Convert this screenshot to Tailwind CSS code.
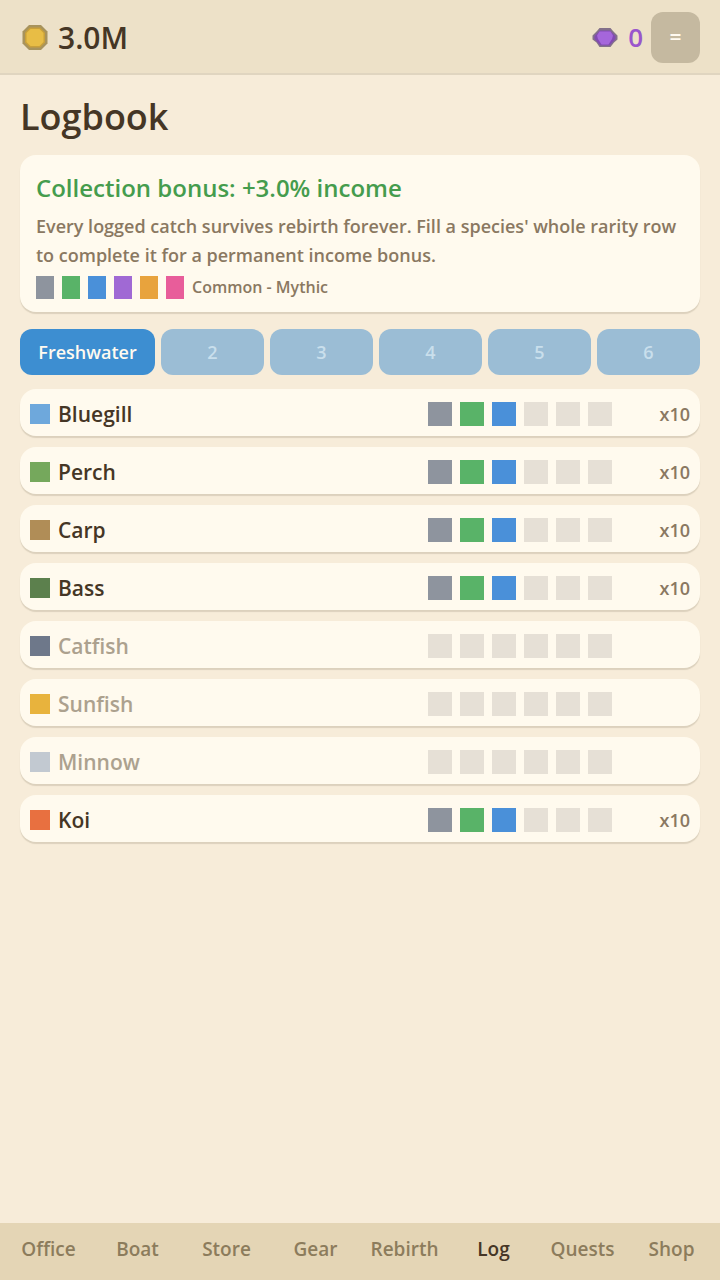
<!DOCTYPE html>
<html lang="en">
<head>
  <meta charset="UTF-8"/>
  <meta name="viewport" content="width=device-width, initial-scale=1.0"/>
  <title>Logbook</title>
  <script src="https://cdn.jsdelivr.net/npm/@tailwindcss/browser@4"></script>
</head>
<body class="flex flex-col min-h-screen bg-[#f7ecd9] font-['Open_Sans','Noto_Sans',sans-serif] font-semibold text-[#453625]">

  <header class="flex items-center justify-between h-[75px] px-5 pt-[2px] bg-[#ede1c8] border-b-2 border-[#e0d5c0]">
    <div class="flex items-center gap-2">
      <svg class="w-[30px] h-[30px]" viewBox="0 0 30 30" aria-label="Coins">
        <path d="M9 2H21L27.500 8.500V20.500L21 27H9L2.500 20.500V8.500Z" fill="#a8935c"/>
        <path d="M10 4.500H20L25 9.500V19.500L20 24.500H10L5 19.500V9.500Z" fill="#c9a03a"/>
        <path d="M10.500 6H19.500L23.500 10V19L19.500 23H10.500L6.500 19V10Z" fill="#e8bd45"/>
      </svg>
      <span class="text-3xl">3.0M</span>
    </div>
    <div class="flex items-center gap-2">
      <svg class="w-[30px] h-[30px]" viewBox="0 0 30 30" aria-label="Gems">
        <path d="M9.500 5H20.500L23 8L27.500 12.500V16.500L24 19.500L20.500 24H9.500L6.500 19.500L2.500 16.500V12.500L7 8Z" fill="#83708a"/>
        <path d="M10 7.500H20L25.500 13V16L19.500 22.500H10.500L4.500 16V13Z" fill="#824ab2"/>
        <path d="M9.500 8.500H20.500L23 12.500L22 16L18.500 21.500H11.500L8 16L7 12.500Z" fill="#a566db"/>
      </svg>
      <span class="text-[26px] text-[#9a55cc]">0</span>
      <button type="button" aria-label="Menu" class="w-[49px] h-[51px] rounded-xl bg-[#c5b9a0] text-[21px] text-[#fffaf0]">=</button>
    </div>
  </header>

  <main class="flex-1 flex flex-col px-5 pt-4">
    <h1 class="text-4xl leading-[52px]">Logbook</h1>

    <section class="mt-3 px-4 pt-4 pb-[13px] rounded-2xl bg-[#fffaee] shadow-[0_2px_1px_#dcd1bd]">
      <h2 class="text-2xl leading-[34px] text-[#459c4d]">Collection bonus: +3.0% income</h2>
      <p class="mt-[7px] text-lg leading-[29px] text-[#8a7861]">Every logged catch survives rebirth forever. Fill a species' whole rarity row to complete it for a permanent income bonus.</p>
      <div class="flex items-center gap-2 mt-[6px]">
        <span class="w-[18px] h-[23px] bg-[#8e949e]"></span>
        <span class="w-[18px] h-[23px] bg-[#59b368]"></span>
        <span class="w-[18px] h-[23px] bg-[#4a90d9]"></span>
        <span class="w-[18px] h-[23px] bg-[#a069d4]"></span>
        <span class="w-[18px] h-[23px] bg-[#e8a33d]"></span>
        <span class="w-[18px] h-[23px] bg-[#e85d9a]"></span>
        <span class="text-base leading-[23px] text-[#8a7861]">Common - Mythic</span>
      </div>
    </section>

    <div class="flex gap-[6px] mt-[17px] text-lg text-[#c9dfec]">
      <button type="button" class="w-[135px] h-[46px] rounded-xl bg-[#3d8ed1] text-[#fffaf0]">Freshwater</button>
      <button type="button" disabled class="flex-1 h-[46px] rounded-xl bg-[#9bbdd5]">2</button>
      <button type="button" disabled class="flex-1 h-[46px] rounded-xl bg-[#9bbdd5]">3</button>
      <button type="button" disabled class="flex-1 h-[46px] rounded-xl bg-[#9bbdd5]">4</button>
      <button type="button" disabled class="flex-1 h-[46px] rounded-xl bg-[#9bbdd5]">5</button>
      <button type="button" disabled class="flex-1 h-[46px] rounded-xl bg-[#9bbdd5]">6</button>
    </div>

    <ul id="species-list" class="flex flex-col gap-[11px] mt-[14px] mb-4"></ul>
  </main>

  <nav class="grid grid-cols-8 h-[57px] px-1 bg-[#e4d5b5] text-[19px] leading-7 text-[#8c7c5c]">
    <a href="#office" class="pt-3 text-center">Office</a>
    <a href="#boat" class="pt-3 text-center">Boat</a>
    <a href="#store" class="pt-3 text-center">Store</a>
    <a href="#gear" class="pt-3 text-center">Gear</a>
    <a href="#rebirth" class="pt-3 text-center">Rebirth</a>
    <a href="#log" aria-current="page" class="pt-3 text-center text-[#453625]">Log</a>
    <a href="#quests" class="pt-3 text-center">Quests</a>
    <a href="#shop" class="pt-3 text-center">Shop</a>
  </nav>

  <script>
    const rarities = ['bg-[#8e949e]', 'bg-[#59b368]', 'bg-[#4a90d9]', 'bg-[#a069d4]', 'bg-[#e8a33d]', 'bg-[#e85d9a]'];

    const species = [
      { name: 'Bluegill', color: 'bg-[#6ea8dc]', logged: 3, count: 10 },
      { name: 'Perch',    color: 'bg-[#75a85c]', logged: 3, count: 10 },
      { name: 'Carp',     color: 'bg-[#b08d57]', logged: 3, count: 10 },
      { name: 'Bass',     color: 'bg-[#5c804d]', logged: 3, count: 10 },
      { name: 'Catfish',  color: 'bg-[#6e788a]', logged: 0, count: 0 },
      { name: 'Sunfish',  color: 'bg-[#e8b33d]', logged: 0, count: 0 },
      { name: 'Minnow',   color: 'bg-[#c2c9d1]', logged: 0, count: 0 },
      { name: 'Koi',      color: 'bg-[#e87040]', logged: 3, count: 10 }
    ];

    document.getElementById('species-list').innerHTML = species.map(s => `
      <li class="flex items-center gap-2 h-[47px] px-[10px] pt-[3px] rounded-2xl bg-[#fffaee] shadow-[0_2px_1px_#dcd1bd]">
        <span class="w-5 h-5 ${s.color}"></span>
        <span class="flex-1 text-[21px] leading-7 ${s.count ? '' : 'text-[#aca18e]'}">${s.name}</span>
        <span class="flex gap-2">
          ${rarities.map((c, i) => `<span class="w-6 h-6 ${i < s.logged ? c : 'bg-[#e6e0d6]'}"></span>`).join('')}
        </span>
        <span class="w-[70px] text-right text-lg text-[#8a7861]">${s.count ? 'x' + s.count : ''}</span>
      </li>`).join('');
  </script>

</body>
</html>
